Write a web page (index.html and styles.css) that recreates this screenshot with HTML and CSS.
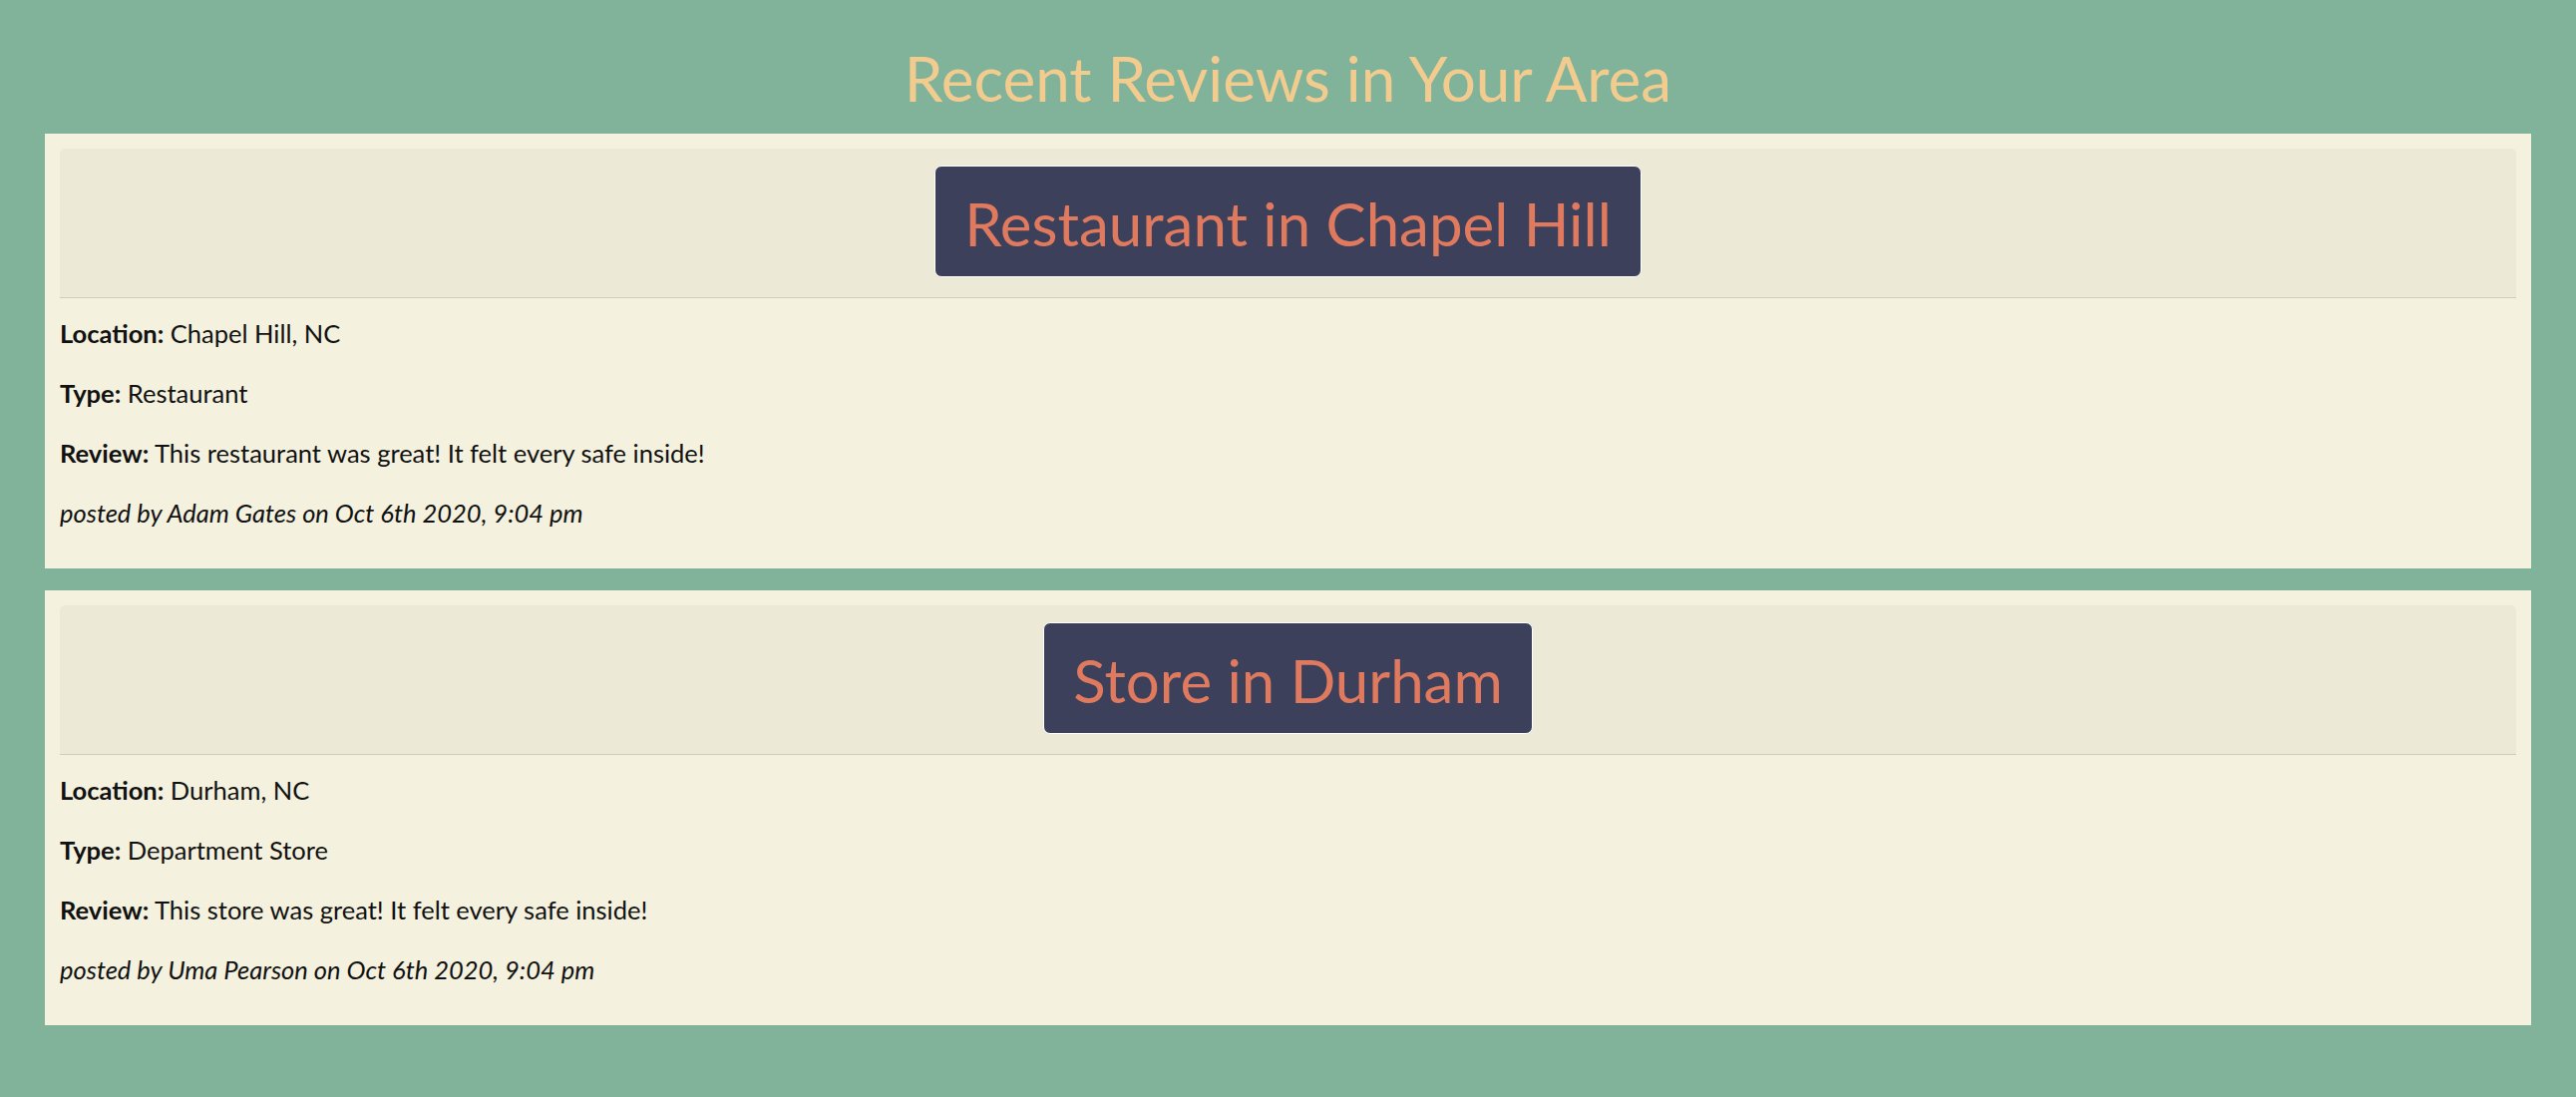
FILE: index.html
```html
<!DOCTYPE html>
<html lang="en">
<head>
<meta charset="utf-8">
<title>Recent Reviews</title>
<link rel="stylesheet" href="styles.css">
</head>
<body>
  <h1 class="page-title">Recent Reviews in Your Area</h1>
  <main class="reviews">
    <section class="card">
      <header class="card-header">
        <span class="place-btn">Restaurant in Chapel Hill</span>
      </header>
      <div class="card-body">
        <p><b>Location:</b> Chapel Hill, NC</p>
        <p><b>Type:</b> Restaurant</p>
        <p><b>Review:</b> This restaurant was great! It felt every safe inside!</p>
        <p class="posted">posted by Adam Gates on Oct 6th 2020, 9:04 pm</p>
      </div>
    </section>
    <section class="card">
      <header class="card-header">
        <span class="place-btn">Store in Durham</span>
      </header>
      <div class="card-body">
        <p><b>Location:</b> Durham, NC</p>
        <p><b>Type:</b> Department Store</p>
        <p><b>Review:</b> This store was great! It felt every safe inside!</p>
        <p class="posted">posted by Uma Pearson on Oct 6th 2020, 9:04 pm</p>
      </div>
    </section>
  </main>
</body>
</html>
```
FILE: styles.css
```css
html, body {
  margin: 0;
  padding: 0;
}
body {
  background: #81b29a;
  font-family: "Source Sans Pro", Lato, "Noto Sans", sans-serif;
  color: #111;
  min-height: 1100px;
}
.page-title {
  margin: 0;
  padding: 41px 0 19px;
  text-align: center;
  font-size: 62px;
  line-height: 74px;
  font-weight: 400;
  color: #f2cc8f;
}
.reviews {
  display: flex;
  flex-direction: column;
  gap: 22px;
  padding: 0 45px;
}
.card {
  background: #f4f1de;
  padding: 15px 15px 16px;
}
.card-header {
  background: rgba(0, 0, 0, 0.03);
  border-bottom: 1px solid rgba(0, 0, 0, 0.125);
  border-radius: 5px 5px 0 0;
  padding: 17px 0 20px;
  text-align: center;
}
.place-btn {
  display: inline-block;
  box-sizing: border-box;
  height: 112px;
  line-height: 114px;
  padding: 0 29px;
  background: #3d405b;
  color: #e07a5f;
  border: 1px solid #fff;
  border-radius: 7px;
  font-size: 60px;
  vertical-align: top;
  overflow: hidden;
}
.card-body {
  padding-top: 15px;
}
.card-body p {
  margin: 0 0 20px;
  font-size: 25.5px;
  line-height: 40px;
}
.card-body b {
  font-weight: 700;
}
.card-body .posted {
  font-style: italic;
}
```
